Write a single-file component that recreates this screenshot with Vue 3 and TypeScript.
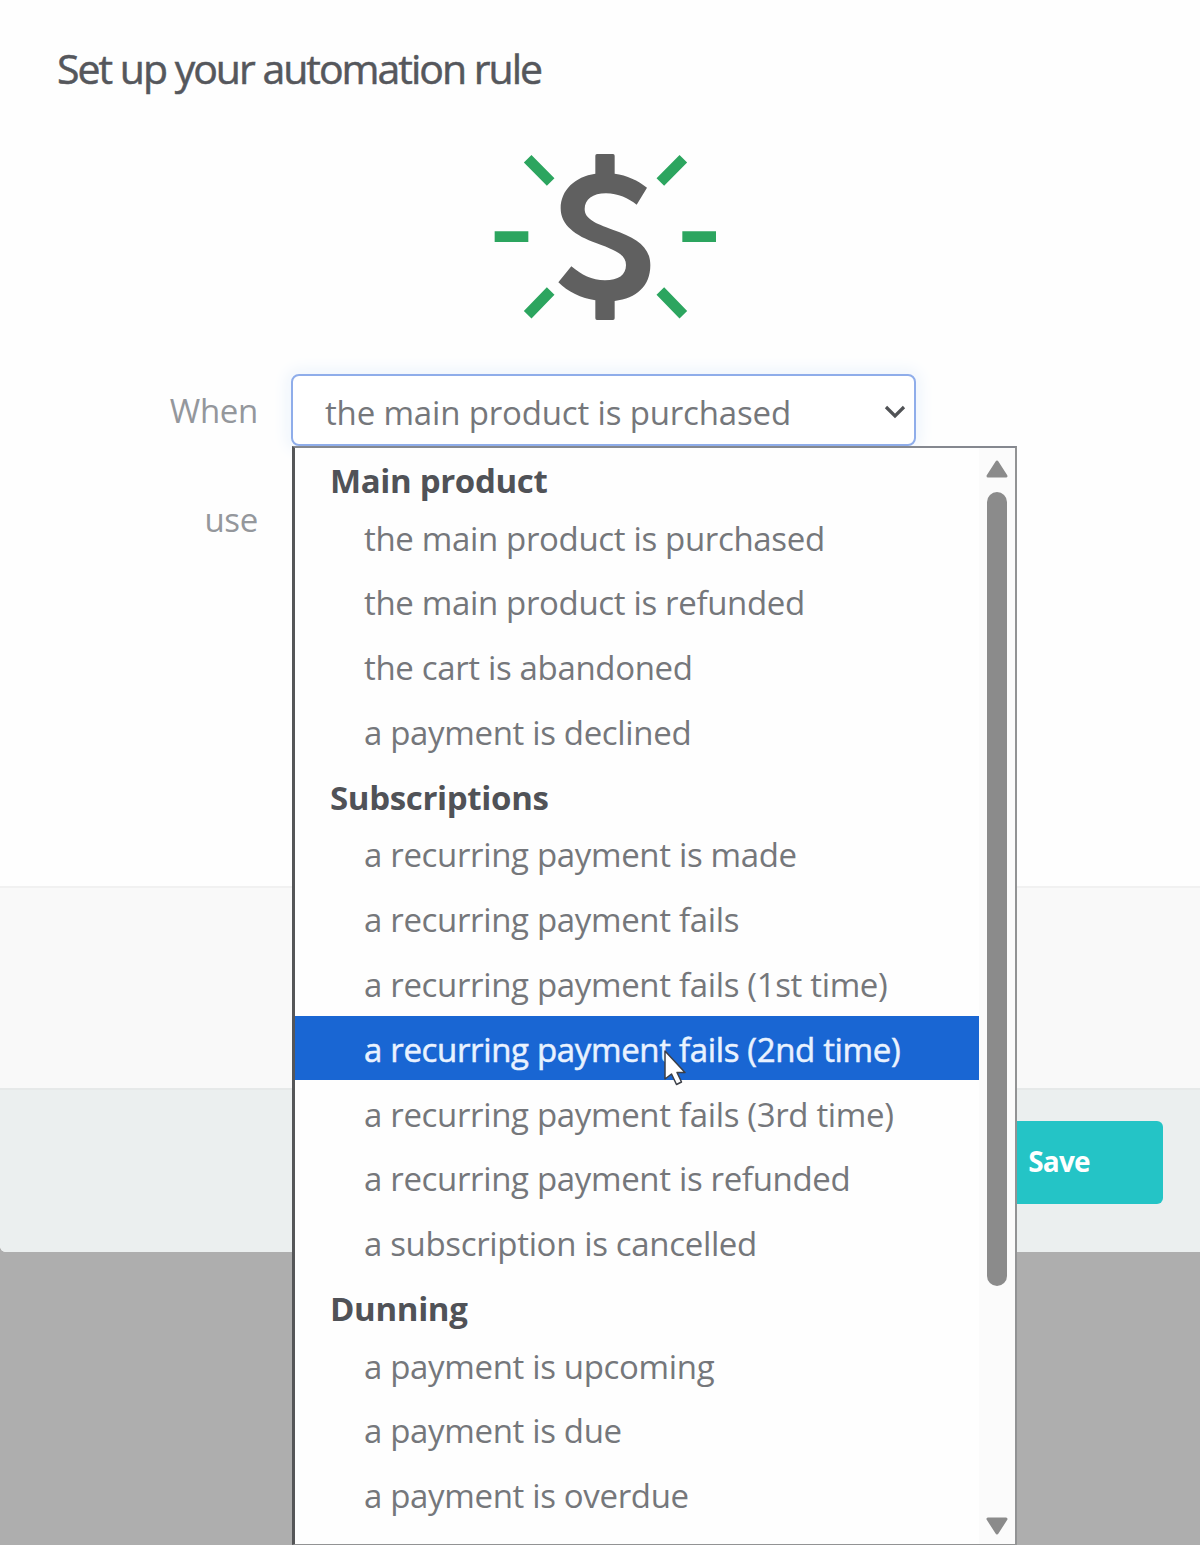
<script setup lang="ts">
interface OptionGroup {
  label: string
  options: string[]
}

const selected = 'the main product is purchased'
const highlighted = 'a recurring payment fails (2nd time)'

const groups: OptionGroup[] = [
  {
    label: 'Main product',
    options: [
      'the main product is purchased',
      'the main product is refunded',
      'the cart is abandoned',
      'a payment is declined',
    ],
  },
  {
    label: 'Subscriptions',
    options: [
      'a recurring payment is made',
      'a recurring payment fails',
      'a recurring payment fails (1st time)',
      'a recurring payment fails (2nd time)',
      'a recurring payment fails (3rd time)',
      'a recurring payment is refunded',
      'a subscription is cancelled',
    ],
  },
  {
    label: 'Dunning',
    options: ['a payment is upcoming', 'a payment is due', 'a payment is overdue'],
  },
]
</script>

<template>
  <div class="page">
    <section class="modal">
      <div class="body">
        <h1 class="title">Set up your automation rule</h1>
        <svg class="money" viewBox="0 0 750 600" aria-hidden="true">
          <g stroke="#2ca55f" stroke-width="32" fill="none">
            <path d="M44 290H145M607 290H708M143 56L212 126M610 56L541 126M143 524L212 453M610 524L541 453" />
          </g>
          <path
            fill="#606060"
            d="M501 143L470 194C445 175 415 160 378 160C338 160 314 178 314 207C314 236 345 250 398 269C470 294 511 320 511 376C511 438 470 475 404 483V535Q404 540 399 540H351Q346 540 346 535V481C305 475 262 455 235 427L274 379C305 405 335 421 375 421C415 421 438 405 438 375C438 345 410 332 350 310C285 287 242 255 242 205C242 150 285 110 346 101V47Q346 42 351 42H399Q404 42 404 47V101C440 105 475 122 501 143Z"
          />
        </svg>
        <div class="field">
          <label class="label">When</label>
          <div class="select">
            <span class="value">{{ selected }}</span>
            <svg class="chevron" viewBox="0 0 22 14" aria-hidden="true">
              <path d="M2 2L11 11L20 2" fill="none" stroke="#505255" stroke-width="3.2" />
            </svg>
            <div class="menu">
              <div class="list">
                <template v-for="group in groups" :key="group.label">
                  <div class="group">{{ group.label }}</div>
                  <div
                    v-for="option in group.options"
                    :key="option"
                    class="option"
                    :class="{ active: option === highlighted }"
                  >
                    {{ option }}
                    <svg v-if="option === highlighted" class="cursor" viewBox="0 0 24 38" aria-hidden="true">
                      <path
                        d="M2 2V30L8.5 25L13.5 35.5L18.5 33L14 23.5H22Z"
                        fill="#fff"
                        stroke="#3c4048"
                        stroke-width="1.5"
                        stroke-linejoin="round"
                      />
                    </svg>
                  </div>
                </template>
              </div>
              <div class="scrollbar">
                <svg class="arrow" viewBox="0 0 24 20"><path d="M12 3L21 17H3Z" /></svg>
                <div class="thumb"></div>
                <svg class="arrow down" viewBox="0 0 24 20"><path d="M3 3H21L12 17Z" /></svg>
              </div>
            </div>
          </div>
        </div>
        <div class="field second"><label class="label">use</label></div>
      </div>
      <div class="extra"></div>
      <footer class="footer"><button class="save" type="button">Save</button></footer>
    </section>
  </div>
</template>

<style>
body {
  margin: 0;
  background: #aeaeae;
}
</style>

<style scoped>
.page {
  height: 1545px;
  overflow: hidden;
  background: #aeaeae;
  font-family: 'Open Sans', 'Noto Sans', sans-serif;
}
.modal {
  display: flex;
  flex-direction: column;
  height: 1252px;
  background: #fefefe;
  border-radius: 0 0 0 6px;
}
.body {
  display: flex;
  flex-direction: column;
  box-sizing: border-box;
  height: 886px;
  padding-top: 38px;
}
.title {
  margin: 0 0 0 57px;
  font-size: 41px;
  font-weight: 400;
  line-height: 60px;
  letter-spacing: -2px;
  color: #55575c;
  white-space: nowrap;
  -webkit-text-stroke: 0.5px #55575c;
}
.money {
  flex: none;
  width: 250px;
  height: 200px;
  margin: 42px 0 0 480px;
}
.field {
  display: flex;
  align-items: center;
  height: 72px;
  margin-top: 34px;
}
.field.second {
  margin-top: 37px;
}
.label {
  width: 258px;
  margin-right: 33px;
  text-align: right;
  font-size: 33px;
  letter-spacing: -0.3px;
  color: #94979c;
}
.select {
  position: relative;
  display: flex;
  align-items: center;
  justify-content: space-between;
  box-sizing: border-box;
  width: 625px;
  height: 72px;
  padding: 4px 8px 0 32px;
  border: 2px solid #8fadea;
  border-radius: 8px;
  background: #fff;
  box-shadow: 0 0 16px 4px #edf4fc;
  font-size: 33px;
  color: #75777b;
}
.value {
  letter-spacing: -0.16px;
  white-space: nowrap;
}
.chevron {
  width: 22px;
  height: 14px;
  margin-top: -1px;
}
.menu {
  position: absolute;
  z-index: 2;
  top: 70px;
  left: -1px;
  display: flex;
  box-sizing: border-box;
  width: 725px;
  height: 1099px;
  border: solid #929394;
  border-width: 2px 2px 1px 3px;
  border-top-color: #85888f;
  border-left-color: #555658;
  background: #fefefe;
}
.list {
  width: 684px;
  margin-top: -1px;
  letter-spacing: -0.34px;
}
.group {
  height: 57.6px;
  line-height: 68px;
  padding-left: 35px;
  font-weight: 700;
  color: #505257;
  white-space: nowrap;
}
.option {
  position: relative;
  height: 64.8px;
  line-height: 68px;
  padding-left: 69px;
  white-space: nowrap;
}
.option.active {
  background: linear-gradient(#1966d3, #1966d3) no-repeat 0 0 / 100% 64px;
  color: #e9f2ff;
  -webkit-text-stroke: 0.5px #e9f2ff;
}
.cursor {
  position: absolute;
  left: 368px;
  top: 33px;
  width: 24px;
  height: 38px;
  z-index: 3;
}
.scrollbar {
  display: flex;
  flex: 1;
  flex-direction: column;
  align-items: center;
  box-sizing: border-box;
  padding: 11px 0 8px;
  background: #fbfbfb;
}
.arrow {
  width: 24px;
  height: 20px;
  fill: #8b8b8b;
  stroke: #8b8b8b;
  stroke-width: 3;
  stroke-linejoin: round;
}
.arrow.down {
  margin-top: auto;
}
.thumb {
  width: 20px;
  height: 794px;
  margin-top: 13px;
  border-radius: 10px;
  background: #8b8b8b;
}
.extra {
  box-sizing: border-box;
  height: 202px;
  border-top: 2px solid #f1f1f1;
  background: #f9f9f9;
}
.footer {
  display: flex;
  justify-content: flex-end;
  box-sizing: border-box;
  height: 164px;
  padding: 31px 37px 0 0;
  border-top: 2px solid #e6e9e9;
  background: #ebefef;
  border-radius: 0 0 0 6px;
}
.save {
  width: 208px;
  height: 83px;
  padding: 0 0 3px;
  border: 0;
  border-radius: 6px;
  background: #24c4c6;
  color: #fff;
  font-family: inherit;
  font-size: 28px;
  font-weight: 700;
  letter-spacing: -0.8px;
}
</style>
